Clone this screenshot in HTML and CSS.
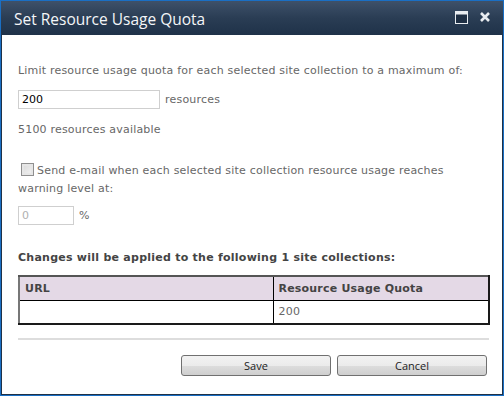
FILE: index.html
```html
<!DOCTYPE html>
<html lang="en">
<head>
    <meta charset="UTF-8">
    <title>Set Resource Usage Quota</title>
    <link rel="stylesheet" href="styles.css">
</head>
<body>
    <div class="dialog">
        <div class="titlebar">
            <span class="title">Set Resource Usage Quota</span>
            <div class="title-icons">
                <svg width="13" height="13" viewBox="0 0 13 13">
                    <rect x="0.5" y="0.5" width="12" height="12" fill="#1e2f44" stroke="#e8ecf0" />
                    <rect x="1" y="1" width="11" height="2.5" fill="#e8ecf0" />
                </svg>
                <svg width="12" height="12" viewBox="0 0 12 12">
                    <path d="M2 2 L10 10 M10 2 L2 10" stroke="#e8ecf0" stroke-width="2.6" />
                </svg>
            </div>
        </div>

        <div class="content">
            <p class="intro">Limit resource usage quota for each selected site collection to a maximum of:</p>

            <div class="field-row">
                <input type="text" class="quota-input" value="200">
                <span>resources</span>
            </div>

            <p class="available">5100 resources available</p>

            <div class="warn-block">
                <label class="warn-label">
                    <span class="checkbox"></span>Send e-mail when each selected site collection resource usage reaches warning level at:
                </label>
            </div>

            <div class="field-row">
                <input type="text" class="percent-input" value="0" disabled>
                <span>%</span>
            </div>

            <h4>Changes will be applied to the following 1 site collections:</h4>

            <table class="sites">
                <tr>
                    <th class="col-url">URL</th>
                    <th>Resource Usage Quota</th>
                </tr>
                <tr>
                    <td></td>
                    <td>200</td>
                </tr>
            </table>

            <div class="separator"></div>

            <div class="buttons">
                <button class="btn">Save</button>
                <button class="btn">Cancel</button>
            </div>
        </div>
    </div>
</body>
</html>
```

FILE: styles.css
```css
* {
box-sizing: border-box;
}

body {
margin: 0;
font-family: "DejaVu Sans", Verdana, sans-serif;
background: #ffffff;
}

.dialog {
width: 504px;
height: 396px;
border: 1px solid #1a6fc4;
box-shadow: inset 1px 0 0 #1f3147, inset -1px 0 0 #1f3147, inset 0 -1px 0 #1f3147;
display: flex;
flex-direction: column;
background: #ffffff;
}

.titlebar {
height: 34px;
flex-shrink: 0;
background: linear-gradient(to bottom, #3e5169, #2a3d54 50%, #1f3249);
display: flex;
justify-content: space-between;
padding: 0 12px 0 13px;
}

.title {
font-family: "Open Sans", sans-serif;
font-size: 15.5px;
color: #f4f6f8;
line-height: 36px;
}

.title-icons {
display: flex;
gap: 11px;
padding-top: 10px;
}

.content {
flex: 1;
padding: 0 15px 0 17px;
font-size: 11px;
letter-spacing: 0.2px;
color: #676767;
}

p {
margin: 0;
}

.intro {
margin-top: 29px;
}

.field-row {
display: flex;
align-items: center;
gap: 5px;
margin-top: 13px;
}

.field-row input {
font-family: "DejaVu Sans", Verdana, sans-serif;
font-size: 11px;
height: 19px;
border: 1px solid #cfcfcf;
padding: 0 3px;
outline: none;
}

.quota-input {
width: 142px;
color: #000;
}

.percent-input {
width: 56px;
color: #b0b0b0;
background: #fff;
}

.available {
margin-top: 14px;
}

.warn-block {
margin-top: 26px;
line-height: 18px;
}

.checkbox {
display: inline-block;
width: 13px;
height: 13px;
border: 1px solid #8f8f8f;
background: linear-gradient(135deg, #d8d8d8, #f4f4f4);
box-shadow: inset 0 0 0 2px #e6e6e6;
vertical-align: -2px;
margin: 0 3px 0 3px;
}

.warn-block + .field-row {
margin-top: 8px;
}

h4 {
margin: 26px 0 0;
font-size: 11px;
font-weight: bold;
letter-spacing: 0.25px;
color: #444444;
}

.sites {
margin-top: 11px;
width: 472px;
border-collapse: collapse;
border: 2px solid #1a1a1a;
border-left-color: #777;
border-top-color: #555;
}

.sites th,
.sites td {
border: 1px solid #000;
text-align: left;
padding: 0 5px;
height: 24px;
font-size: 11px;
}

.sites th {
background: #e4d9e6;
color: #444;
font-weight: bold;
}

.col-url {
width: 254px;
}

.separator {
margin-top: 13px;
width: 471px;
height: 2px;
background: #dddddd;
}

.buttons {
display: flex;
justify-content: flex-end;
gap: 6px;
margin-top: 15px;
padding-right: 1px;
}

.btn {
width: 150px;
height: 21px;
font-family: "Open Sans", sans-serif;
font-size: 11px;
color: #222;
border: 1px solid #707070;
border-radius: 3px;
background: linear-gradient(to bottom, #f2f2f2, #ebebeb 50%, #dddddd 50%, #cfcfcf);
padding: 0;
}
```
